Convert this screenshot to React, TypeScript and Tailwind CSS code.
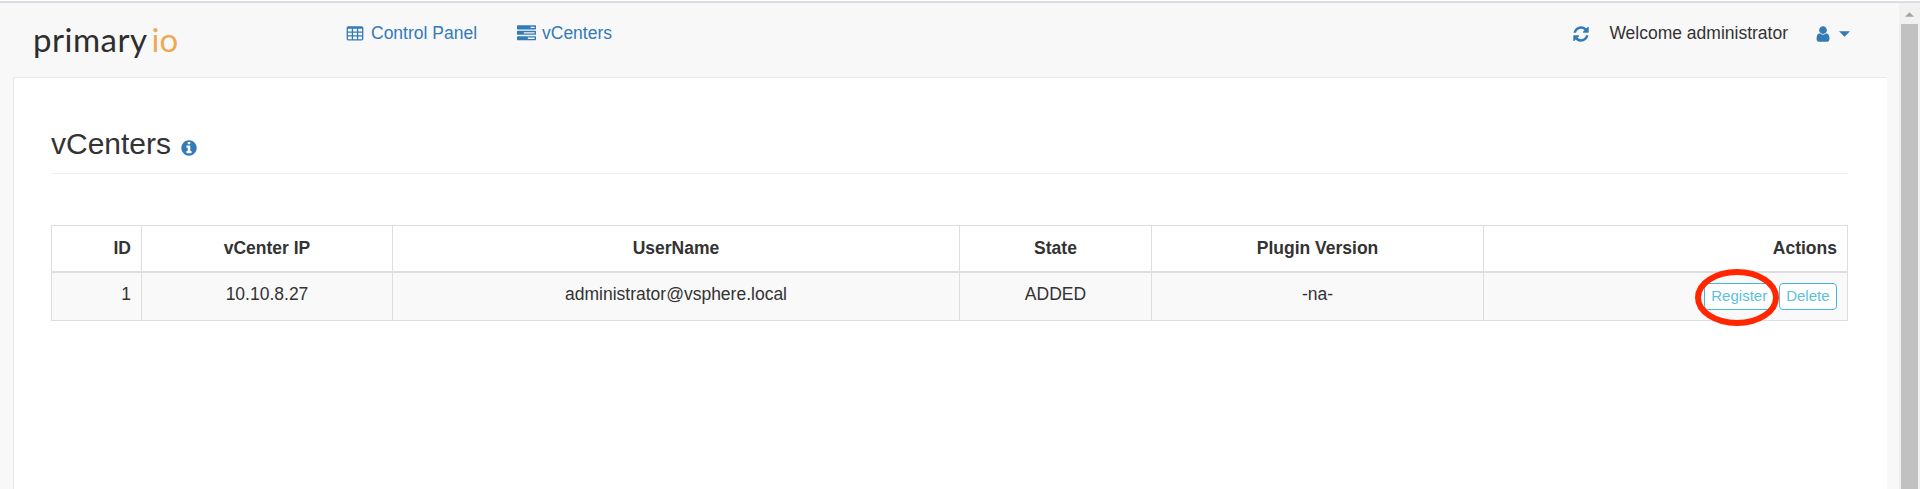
import React from "react";

const ICONS = {
  table:
    "M224 128H1568A160 160 0 0 1 1728 288V1376A160 160 0 0 1 1568 1536H224A160 160 0 0 1 64 1376V288A160 160 0 0 1 224 128ZM192 384V640H576V384ZM704 384V640H1088V384ZM1216 384V640H1600V384ZM192 768V1024H576V768ZM704 768V1024H1088V768ZM1216 768V1024H1600V768ZM192 1152V1376Q192 1408 224 1408H576V1152ZM704 1152V1408H1088V1152ZM1216 1152V1408H1568Q1600 1408 1600 1376V1152Z",
  tasks:
    "M1024 1408h640v-128h-640v128zm-384-512h1024v-128h-1024v128zm640-512h384v-128h-384v128zm512 832v256q0 26-19 45t-45 19h-1664q-26 0-45-19t-19-45v-256q0-26 19-45t45-19h1664q26 0 45 19t19 45zm0-512v256q0 26-19 45t-45 19h-1664q-26 0-45-19t-19-45v-256q0-26 19-45t45-19h1664q26 0 45 19t19 45zm0-512v256q0 26-19 45t-45 19h-1664q-26 0-45-19t-19-45v-256q0-26 19-45t45-19h1664q26 0 45 19t19 45z",
  refresh:
    "M1639 1056q0 5-1 7-64 268-268 434.5t-478 166.5q-146 0-282.5-55t-243.5-157l-129 129q-19 19-45 19t-45-19-19-45v-448q0-26 19-45t45-19h448q26 0 45 19t19 45-19 45l-137 137q71 66 161 102t187 36q134 0 250-65t186-179q11-17 53-117 8-23 30-23h192q13 0 22.5 9.5t9.5 22.5zm25-800v448q0 26-19 45t-45 19h-448q-26 0-45-19t-19-45 19-45l138-138q-148-137-349-137-134 0-250 65t-186 179q-11 17-53 117-8 23-30 23h-199q-13 0-22.5-9.5t-9.5-22.5v-7q65-268 270-434.5t480-166.5q146 0 284 55.5t245 156.5l130-129q19-19 45-19t45 19 19 45z",
  user:
    "M1536 1399q0 109-62.5 187t-150.5 78h-854q-88 0-150.5-78t-62.5-187q0-85 8.5-160.5t31.5-152 58.5-131 94-89 134.5-34.5q131 128 313 128t313-128q76 0 134.5 34.5t94 89 58.5 131 31.5 152 8.5 160.5zm-256-887q0 159-112.5 271.5t-271.5 112.5-271.5-112.5-112.5-271.5 112.5-271.5 271.5-112.5 271.5 112.5 112.5 271.5z",
  info:
    "M1152 1376v-160q0-14-9-23t-23-9h-96v-512q0-14-9-23t-23-9h-320q-14 0-23 9t-9 23v160q0 14 9 23t23 9h96v320h-96q-14 0-23 9t-9 23v160q0 14 9 23t23 9h448q14 0 23-9t9-23zm-128-896v-160q0-14-9-23t-23-9h-192q-14 0-23 9t-9 23v160q0 14 9 23t23 9h192q14 0 23-9t9-23zm640 416q0 209-103 385.5t-279.5 279.5-385.5 103-385.5-103-279.5-279.5-103-385.5 103-385.5 279.5-279.5 385.5-103 385.5 103 279.5 279.5 103 385.5z",
};

function Icon({ name, className }: { name: keyof typeof ICONS; className: string }) {
  return (
    <svg viewBox="0 0 1792 1792" fill="currentColor" fillRule="evenodd" className={className} aria-hidden="true">
      <path d={ICONS[name]} />
    </svg>
  );
}

function Navbar() {
  return (
    <header className="flex h-[74px] items-start text-[17.5px] leading-[25px] text-[#337ab7]">
      <div className="w-[346px] shrink-0 pl-[33px] pt-[16px] font-['Lato',sans-serif] text-[33px] leading-[40px] whitespace-nowrap">
        <span className="tracking-[0.5px] text-[#2e2e2e]">primary</span>
        <span className="ml-[4px] text-[#efa857]">io</span>
      </div>
      <nav className="flex pt-[18px]">
        <a className="flex w-[171px]">
          <Icon name="table" className="mt-[4px] mr-[7px] size-[18px]" />
          Control Panel
        </a>
        <a className="flex">
          <Icon name="tasks" className="mt-[3px] mr-[6px] size-[19px]" />
          vCenters
        </a>
      </nav>
      <div className="ml-auto flex pt-[18px] pr-[49px]">
        <Icon name="refresh" className="mt-[4px] size-[18px]" />
        <span className="ml-[19px] text-[#333]">Welcome administrator</span>
        <Icon name="user" className="mt-[4px] ml-[26px] size-[18px]" />
        <svg viewBox="0 0 10 5" className="mt-[10px] ml-[7px] h-[6px] w-[11px]" fill="currentColor" aria-hidden="true">
          <path d="M0 0H10L5 5Z" />
        </svg>
      </div>
    </header>
  );
}

const actionButton =
  "h-[27px] rounded-[4px] border border-[#46b8da] bg-white px-[6.5px] text-[15px] leading-[24px] text-[#5bc0de]";

function VCenterTable() {
  const th = "border border-b-2 border-[#ddd] px-[10px] font-bold";
  const td = "border border-[#ddd] px-[10px] pt-[9px] align-top";
  return (
    <table className="w-[1797px] table-fixed border-collapse text-center text-[17.5px] leading-[25px]">
      <colgroup>
        <col className="w-[90px]" />
        <col className="w-[251px]" />
        <col className="w-[567px]" />
        <col className="w-[192px]" />
        <col className="w-[332px]" />
        <col className="w-[364px]" />
      </colgroup>
      <thead>
        <tr className="h-[46px]">
          <th className={`${th} text-right`}>ID</th>
          <th className={th}>vCenter IP</th>
          <th className={th}>UserName</th>
          <th className={th}>State</th>
          <th className={th}>Plugin Version</th>
          <th className={`${th} text-right`}>Actions</th>
        </tr>
      </thead>
      <tbody>
        <tr className="h-[49px] bg-[#f9f9f9]">
          <td className={`${td} text-right`}>1</td>
          <td className={td}>10.10.8.27</td>
          <td className={td}>administrator@vsphere.local</td>
          <td className={td}>ADDED</td>
          <td className={td}>-na-</td>
          <td className={td}>
            <div className="flex justify-end gap-[4px] pt-px">
              <div className="relative">
                <button className={actionButton}>Register</button>
                <svg
                  viewBox="0 0 84 57"
                  className="absolute -top-[14px] -left-[9px] h-[57px] w-[84px] max-w-none"
                  fill="none"
                  aria-hidden="true"
                >
                  <ellipse cx="42" cy="28.5" rx="39" ry="25.5" stroke="#ff2600" strokeWidth="6" />
                </svg>
              </div>
              <button className={actionButton}>Delete</button>
            </div>
          </td>
        </tr>
      </tbody>
    </table>
  );
}

export default function App() {
  return (
    <div className="flex h-[489px] flex-col overflow-hidden bg-white font-['Liberation_Sans',Arial,sans-serif] text-[#333]">
      <div className="mt-px h-[2px] shrink-0 bg-[#dcdce2]" />
      <div className="flex min-h-0 flex-1">
        <div className="flex min-w-0 flex-1 flex-col bg-[#f8f8f8]">
          <Navbar />
          <main className="mr-[12px] ml-[13px] flex-1 border-t border-l border-[#e7e7e7] bg-white pr-[39px] pl-[37px]">
            <h1 className="flex h-[96px] border-b border-[#eee] pt-[49px] text-[30px] leading-[33px]">
              vCenters
              <Icon name="info" className="mt-[12px] ml-[9px] size-[18px] text-[#337ab7]" />
            </h1>
            <div className="mt-[51px]">
              <VCenterTable />
            </div>
          </main>
        </div>
        <div className="flex w-[21px] shrink-0 flex-col bg-[#f1f1f1]">
          <svg viewBox="0 0 10 5" className="mt-[9px] ml-[6px] h-[5px] w-[9px]" fill="#a3a3a3" aria-hidden="true">
            <path d="M0 5H10L5 0Z" />
          </svg>
          <div className="mt-[7px] ml-[2px] w-[17px] flex-1 bg-[#c1c1c1]" />
        </div>
      </div>
    </div>
  );
}
